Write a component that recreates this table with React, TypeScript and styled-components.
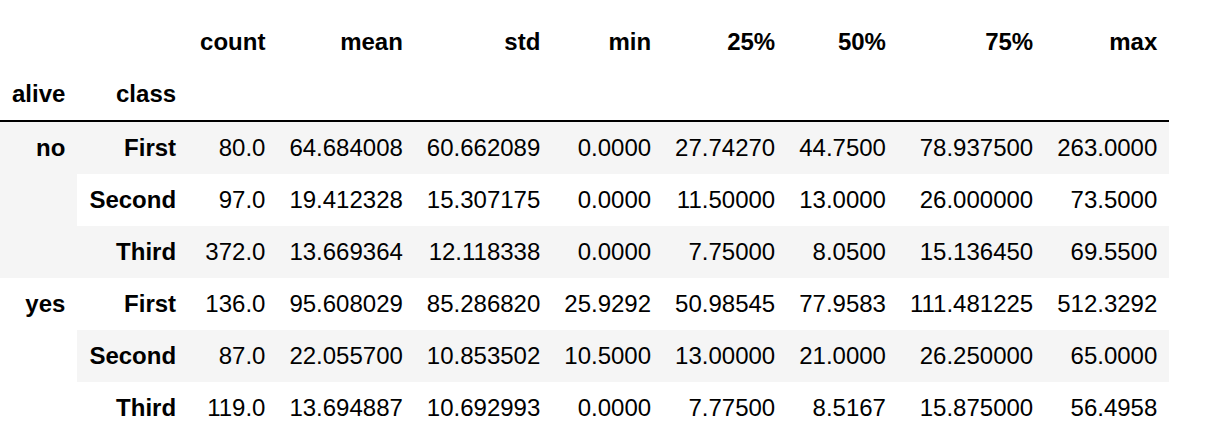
import React from "react";
import styled, { createGlobalStyle } from "styled-components";

type Row = {
  alive?: string;
  span?: number;
  cls: string;
  values: string[];
};

const columns = ["count", "mean", "std", "min", "25%", "50%", "75%", "max"];

const rows: Row[] = [
  { alive: "no", span: 3, cls: "First", values: ["80.0", "64.684008", "60.662089", "0.0000", "27.74270", "44.7500", "78.937500", "263.0000"] },
  { cls: "Second", values: ["97.0", "19.412328", "15.307175", "0.0000", "11.50000", "13.0000", "26.000000", "73.5000"] },
  { cls: "Third", values: ["372.0", "13.669364", "12.118338", "0.0000", "7.75000", "8.0500", "15.136450", "69.5500"] },
  { alive: "yes", span: 3, cls: "First", values: ["136.0", "95.608029", "85.286820", "25.9292", "50.98545", "77.9583", "111.481225", "512.3292"] },
  { cls: "Second", values: ["87.0", "22.055700", "10.853502", "10.5000", "13.00000", "21.0000", "26.250000", "65.0000"] },
  { cls: "Third", values: ["119.0", "13.694887", "10.692993", "0.0000", "7.77500", "8.5167", "15.875000", "56.4958"] },
];

const GlobalStyle = createGlobalStyle`
  html, body {
    margin: 0;
    padding: 0;
    background: #ffffff;
  }
`;

/** 출력 영역 전체 */
const OutputArea = styled.div`
  padding-top: 16px;
  font-family: "Liberation Sans", Arial, sans-serif;
  color: #000000;
`;

/** 데이터프레임 표 */
const FrameTable = styled.table`
  border-collapse: collapse;
  border-spacing: 0;
  font-size: 24px;
  line-height: normal;
`;

/** 헤더 묶음 (아래 굵은 선) */
const Head = styled.thead`
  border-bottom: 2px solid #000000;
`;

/** 줄무늬 행 */
const BodyRow = styled.tr`
  &:nth-child(odd) {
    background: #f5f5f5;
  }
`;

/** 머리 칸 */
const HeadCell = styled.th<{ $top?: boolean }>`
  padding: 12px;
  font-weight: bold;
  text-align: right;
  white-space: nowrap;
  vertical-align: ${(p) => (p.$top ? "top" : "middle")};
`;

/** 숫자 칸 */
const Cell = styled.td`
  padding: 12px;
  text-align: right;
  white-space: nowrap;
  vertical-align: middle;
`;

export default function App() {
  return (
    <>
      <GlobalStyle />
      <OutputArea>
        <FrameTable>
          <Head>
            <tr>
              <HeadCell />
              <HeadCell />
              {columns.map((c) => (
                <HeadCell key={c}>{c}</HeadCell>
              ))}
            </tr>
            <tr>
              <HeadCell>alive</HeadCell>
              <HeadCell>class</HeadCell>
              {columns.map((c) => (
                <HeadCell key={c} />
              ))}
            </tr>
          </Head>
          <tbody>
            {rows.map((r, i) => (
              <BodyRow key={i}>
                {r.alive && (
                  <HeadCell $top rowSpan={r.span}>
                    {r.alive}
                  </HeadCell>
                )}
                <HeadCell>{r.cls}</HeadCell>
                {r.values.map((v, j) => (
                  <Cell key={j}>{v}</Cell>
                ))}
              </BodyRow>
            ))}
          </tbody>
        </FrameTable>
      </OutputArea>
    </>
  );
}
